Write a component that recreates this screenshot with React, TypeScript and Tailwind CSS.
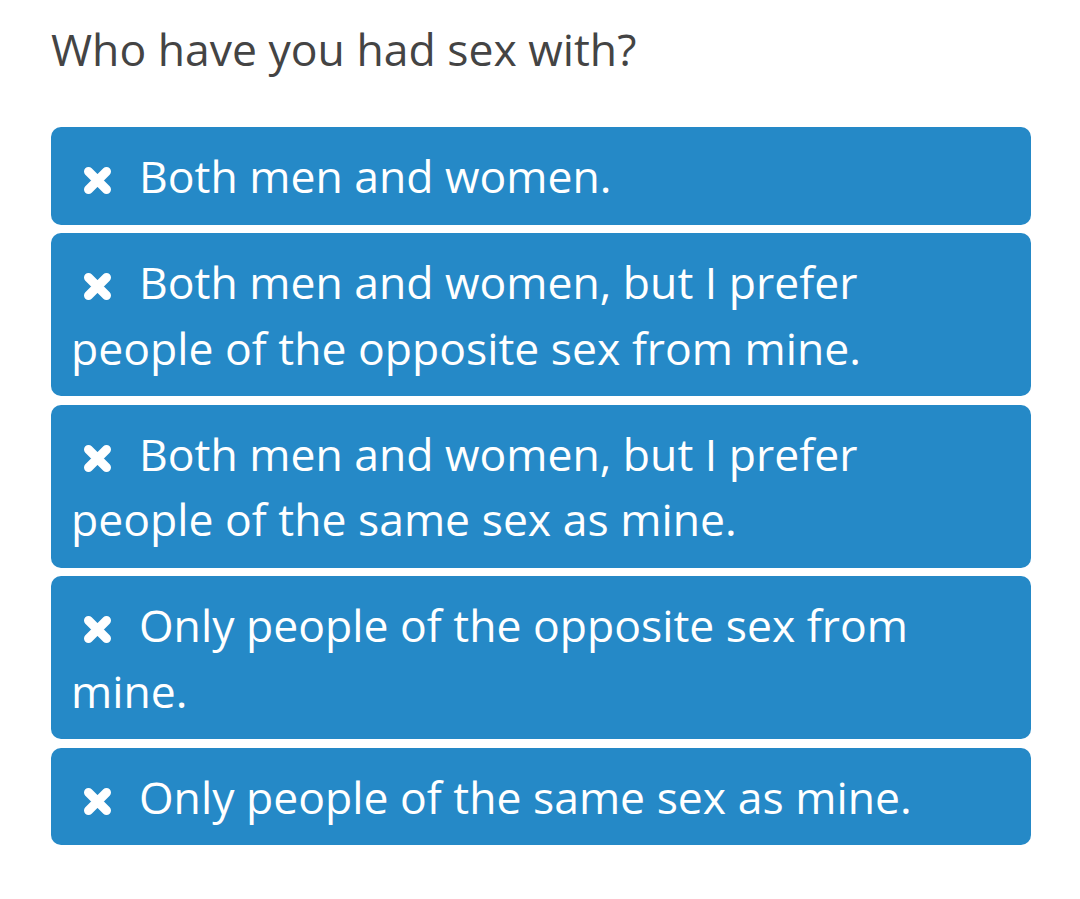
import React from 'react';

const options = [
  'Both men and women.',
  'Both men and women, but I prefer people of the opposite sex from mine.',
  'Both men and women, but I prefer people of the same sex as mine.',
  'Only people of the opposite sex from mine.',
  'Only people of the same sex as mine.',
];

const Cross = () => (
  <svg
    width="29"
    height="29"
    viewBox="0 0 29 29"
    className="inline-block align-[-2px] ml-[12px] mr-[27px]"
  >
    <path
      d="M5.5 5.5L23.5 23.5M23.5 5.5L5.5 23.5"
      stroke="white"
      strokeWidth="9"
      strokeLinecap="round"
    />
  </svg>
);

const App: React.FC = () => {
  return (
    <div className="min-h-[899px] bg-white pl-[51px] pt-[17px]" style={{ fontFamily: '"Open Sans", sans-serif' }}>
      <h1 className="text-[44.5px] leading-[64px] text-[#444444] font-normal">Who have you had sex with?</h1>
      <div className="mt-[46px] w-[980px] flex flex-col gap-[8.5px]">
        {options.map((o) => (
          <button
            key={o}
            className="w-full text-left bg-[#2589c7] rounded-[10px] px-[20px] py-[16px] text-white text-[44.5px] leading-[65.5px]"
          >
            <Cross />
            {o}
          </button>
        ))}
      </div>
    </div>
  );
};

export default App;
